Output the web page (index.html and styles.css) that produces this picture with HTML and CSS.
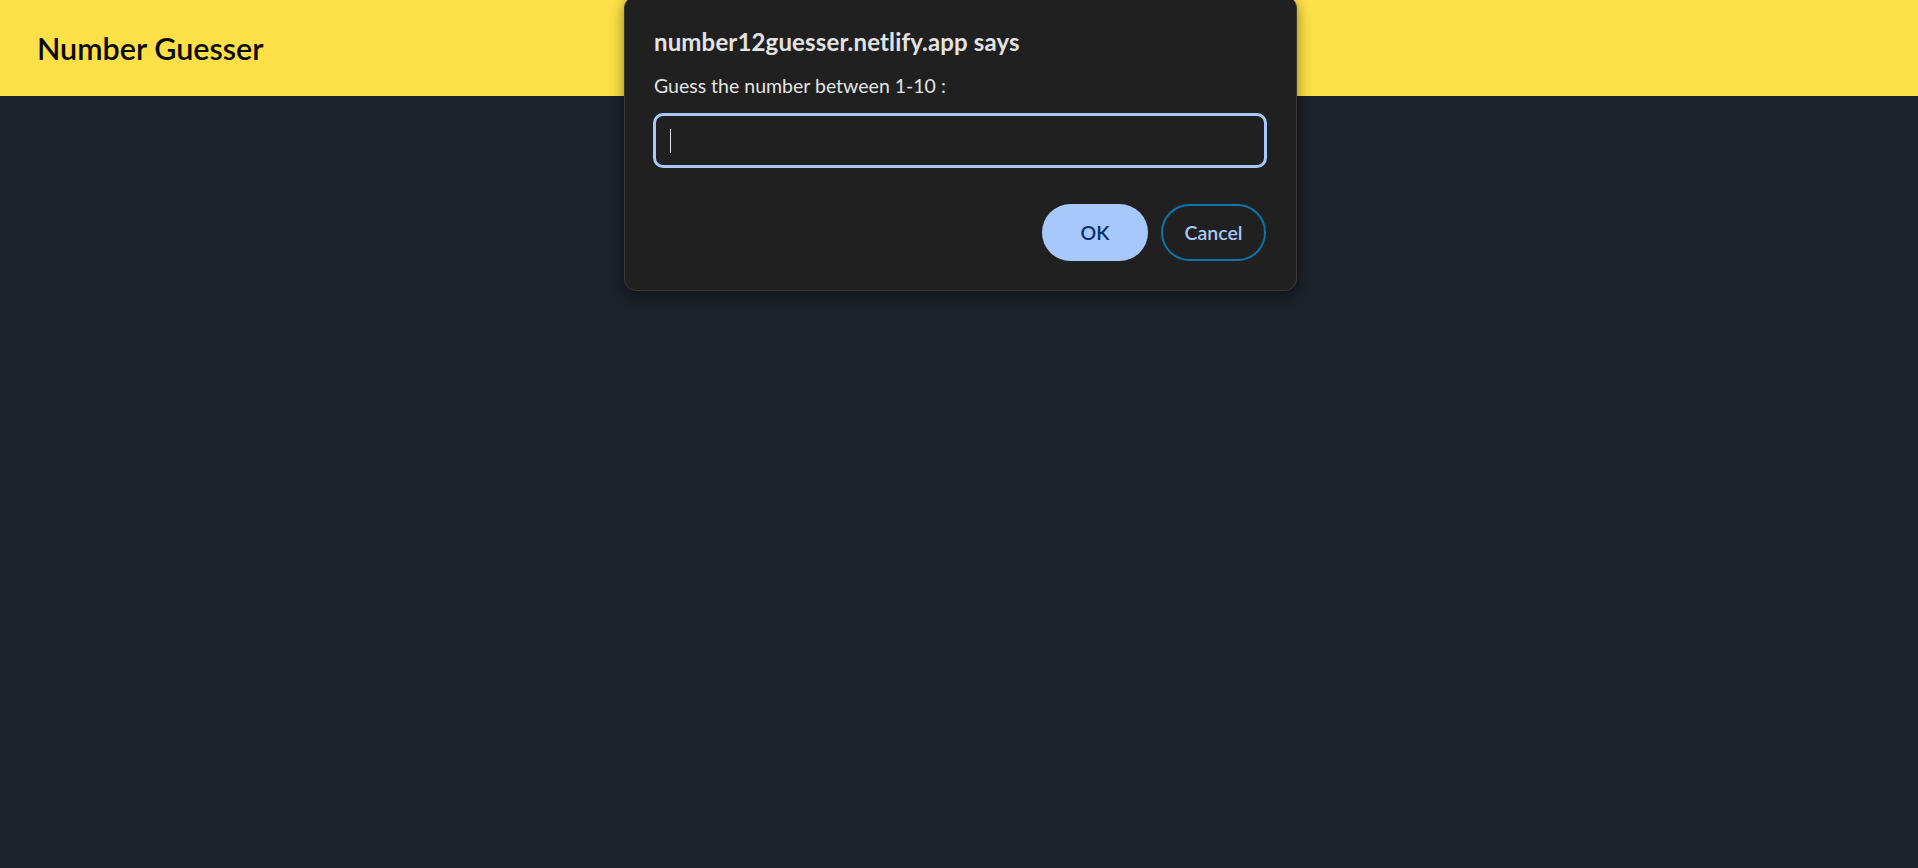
FILE: index.html
```html
<!DOCTYPE html>
<html lang="en">
<head>
<meta charset="utf-8">
<title>Number Guesser</title>
<link rel="stylesheet" href="styles.css">
</head>
<body>
<header class="topbar">
  <h1 class="brand">Number Guesser</h1>
</header>
<main class="page"></main>

<div class="dialog" role="dialog">
  <div class="dialog-title">number12guesser.netlify.app says</div>
  <div class="dialog-msg">Guess the number between 1-10 :</div>
  <div class="dialog-input"><span class="caret"></span></div>
  <div class="dialog-actions">
    <button class="btn btn-ok">OK</button>
    <button class="btn btn-cancel">Cancel</button>
  </div>
</div>
</body>
</html>
```
FILE: styles.css
```css
html, body {
  margin: 0;
  padding: 0;
}
body {
  background: #1d2129;
  height: 868px;
  overflow: hidden;
  font-family: Lato, "Open Sans", sans-serif;
}
.topbar {
  height: 96px;
  background: #fde047;
  display: flex;
  align-items: center;
  padding-left: 37px;
  box-sizing: border-box;
}
.brand {
  margin: 0;
  font-size: 30.5px;
  font-weight: 600;
  color: #0a0a0a;
  line-height: 1;
}
.dialog {
  position: absolute;
  left: 624px;
  top: -4px;
  width: 673px;
  height: 295px;
  box-sizing: border-box;
  background: #202020;
  border: 1px solid #3a3a3a;
  border-radius: 12px;
  box-shadow: 0 4px 14px rgba(0, 0, 0, 0.45);
  padding: 30px 29px 0 28px;
  display: flex;
  flex-direction: column;
  color: #e3e3e3;
}
.dialog-title {
  font-size: 24px;
  font-weight: 700;
  line-height: 30px;
  letter-spacing: 0.15px;
  padding-left: 1px;
}
.dialog-msg {
  margin-top: 17px;
  font-size: 19.5px;
  line-height: 24px;
  padding-left: 1px;
}
.dialog-input {
  margin-top: 15px;
  height: 55px;
  box-sizing: border-box;
  border: 3px solid #a8c7fa;
  border-radius: 10px;
  display: flex;
  align-items: center;
  padding-left: 14px;
}
.caret {
  width: 1px;
  height: 24px;
  background: #e3e3e3;
}
.dialog-actions {
  margin-top: 36px;
  display: flex;
  justify-content: flex-end;
  gap: 13px;
  padding-right: 1px;
}
.btn {
  height: 57px;
  border-radius: 29px;
  font-family: Lato, "Open Sans", sans-serif;
  font-size: 19.5px;
  font-weight: 600;
  box-sizing: border-box;
  cursor: pointer;
}
.btn-ok {
  width: 106px;
  background: #a8c7fa;
  color: #062e6f;
  border: none;
}
.btn-cancel {
  width: 105px;
  background: transparent;
  color: #a8c7fa;
  border: 2px solid #0b74aa;
}
```
